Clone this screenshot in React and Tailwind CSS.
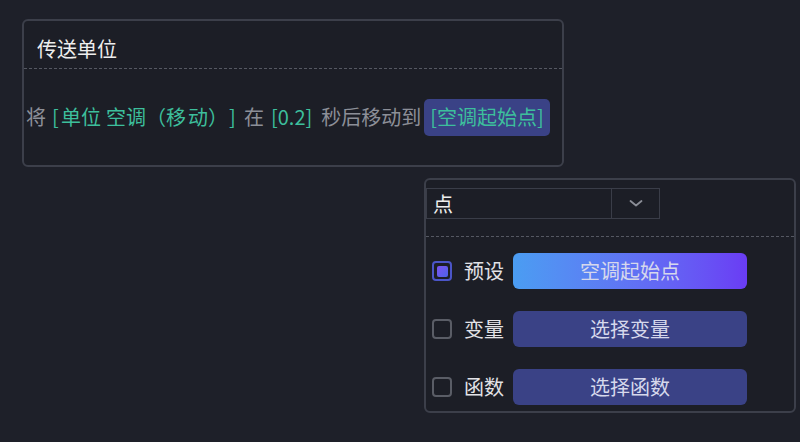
import React from "react";

const font = { fontFamily: '"Noto Sans CJK SC", "Noto Sans", sans-serif' };

function Check({ checked }) {
  if (checked) {
    return (
      <div className="w-[20px] h-[20px] rounded-[4px] border-2 border-[#4b55c8] flex items-center justify-center">
        <div className="w-[11px] h-[11px] rounded-[2px] bg-gradient-to-br from-[#7a52f0] to-[#4a62e8]" />
      </div>
    );
  }
  return <div className="w-[20px] h-[20px] rounded-[4px] border-2 border-[#5a5d66]" />;
}

function Row({ checked, label, btn, active }) {
  return (
    <div className="flex items-center h-[36px]">
      <div className="ml-[6px]"><Check checked={checked} /></div>
      <span className="ml-[12px] text-[20px] leading-none text-[#e2e2e6] w-[49px]">{label}</span>
      <div
        className={
          "w-[234px] h-[36px] rounded-[6px] flex items-center justify-center text-[20px] leading-none text-[#d6d8ec] " +
          (active ? "bg-gradient-to-r from-[#4a9df2] to-[#6a3cf4]" : "bg-[#3a4286]")
        }
      >
        {btn}
      </div>
    </div>
  );
}

const G = "text-[#8c8f98]";
const T = "text-[#3dbf9c]";

export default function App() {
  return (
    <div className="w-[800px] h-[442px] bg-[#1e2029] overflow-hidden flex flex-col" style={font}>
      <div className="ml-[22px] mt-[19px] w-[542px] h-[148px] border-2 border-[#3c3f4a] rounded-[6px] bg-[#1c1e26] flex flex-col">
        <div className="h-[48px] flex items-center pl-[13px] pt-[9px] text-[20px] leading-none text-[#eeeeee] border-b border-dashed border-[#555862]">
          传送单位
        </div>
        <div className="flex-1 flex items-center pl-[2px] text-[20px] leading-none whitespace-pre">
          <span className={G + " w-[20px] shrink-0"}>将</span>
          <span className={T + " ml-[6px] w-[8px] shrink-0"}>[</span>
          <span className={T + " ml-[1px] w-[40px] shrink-0"}>单位</span>
          <span className={T + " ml-[5px] w-[40px] shrink-0"}>空调</span>
          <span className={T + " w-[20px] shrink-0"}>（</span>
          <span className={T + " w-[20px] shrink-0"}>移</span>
          <span className={T + " ml-[2px] w-[20px] shrink-0"}>动</span>
          <span className={T + " w-[20px] shrink-0"}>）</span>
          <span className={T + " ml-[1px] w-[8px] shrink-0"}>]</span>
          <span className={G + " ml-[7px] w-[20px] shrink-0"}>在</span>
          <span className={T + " ml-[7px] shrink-0"}>[0.2]</span>
          <span className={G + " ml-[9px] shrink-0"}>秒后移动到</span>
          <span className="ml-[3px] h-[37px] px-[6px] rounded-[5px] bg-[#3a4286] text-[#3dbf9c] flex items-center shrink-0">[空调起始点]</span>
        </div>
      </div>
      <div className="ml-[424px] mt-[11px] w-[372px] h-[235px] border-2 border-[#3c3f4a] rounded-[6px] bg-[#1c1e26] flex flex-col">
        <div className="h-[57px] border-b border-dashed border-[#555862] pt-[8px]">
          <div className="w-[234px] h-[31px] border border-[#3a3d48] flex">
            <div className="flex-1 flex items-center pl-[6px] text-[20px] leading-none text-[#eeeeee]">点</div>
            <div className="w-[48px] border-l border-[#3a3d48] flex items-center justify-center">
              <svg width="14" height="9" viewBox="0 0 14 9" fill="none">
                <path d="M1.5 2 L7 6.5 L12.5 2" stroke="#8a8d96" strokeWidth="1.8" strokeLinecap="round" strokeLinejoin="round" />
              </svg>
            </div>
          </div>
        </div>
        <div className="flex flex-col gap-[22px] pt-[16px]">
          <Row checked label="预设" btn="空调起始点" active />
          <Row label="变量" btn="选择变量" />
          <Row label="函数" btn="选择函数" />
        </div>
      </div>
    </div>
  );
}
